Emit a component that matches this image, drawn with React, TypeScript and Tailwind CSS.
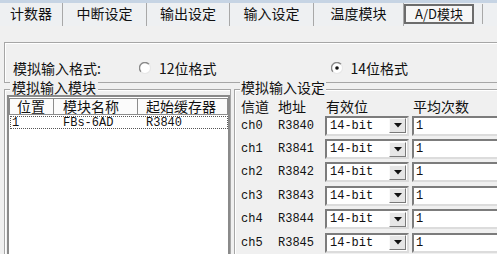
import React from "react";

const cjk = "font-['Noto_Sans_CJK_SC','Noto_Sans_CJK_JP',sans-serif]";
const mono = "font-['Liberation_Mono','Noto_Sans_CJK_SC',monospace]";

const tabs = [
  { label: "计数器", w: "w-[63px]" },
  { label: "中断设定", w: "w-[84px]" },
  { label: "输出设定", w: "w-[83px]" },
  { label: "输入设定", w: "w-[84px]" },
  { label: "温度模块", w: "w-[90px]" },
];

const channels = [
  { ch: "ch0", addr: "R3840" },
  { ch: "ch1", addr: "R3841" },
  { ch: "ch2", addr: "R3842" },
  { ch: "ch3", addr: "R3843" },
  { ch: "ch4", addr: "R3844" },
  { ch: "ch5", addr: "R3845" },
];

function Radio({ checked }: { checked?: boolean }) {
  return (
    <svg width="12" height="12" viewBox="0 0 12 12" className="shrink-0">
      <circle cx="6" cy="6" r="5.5" fill="#fff" />
      <path d="M10 2.2 A5 5 0 0 0 2 9.8" fill="none" stroke="#8a8a8a" strokeWidth="1.4" />
      <path d="M10 2.2 A5 5 0 0 1 2 9.8" fill="none" stroke="#e8e8e8" strokeWidth="1.2" />
      {checked ? <circle cx="6" cy="6" r="1.8" fill="#111" /> : null}
    </svg>
  );
}

function Combo() {
  return (
    <div className="flex h-[20px] w-[84px] items-center border-2 border-t-[#7c7c7c] border-l-[#7c7c7c] border-r-[#dcdcdc] border-b-[#dcdcdc] bg-white">
      <span className={`${mono} flex-1 pl-[3px] text-[12px] leading-none`}>14-bit</span>
      <div className="mr-[1px] flex h-[15px] w-[17px] items-center justify-center border border-t-[#fafafa] border-l-[#fafafa] border-r-[#7a7a7a] border-b-[#7a7a7a] bg-[#e6e6e6]">
        <svg width="8" height="5" viewBox="0 0 8 5">
          <path d="M0 0 H8 L4 4.5 Z" fill="#111" />
        </svg>
      </div>
    </div>
  );
}

export default function App() {
  return (
    <div className={`${cjk} h-[254px] w-[497px] overflow-hidden bg-[#f0f0f0] text-[14px] text-[#111]`}>
      {/* tab strip */}
      <div className="flex h-[26px] border-t-[3px] border-[#c6d4e4] bg-[#eef0f2]">
        {tabs.map((t) => (
          <div
            key={t.label}
            className={`${t.w} flex items-center justify-center border-r border-[#a8a8a8] pb-[4px] leading-[16px]`}
          >
            {t.label}
          </div>
        ))}
        <div className="mt-[1px] flex h-[20px] w-[70px] items-center justify-center border-2 border-[#6c6c6c] bg-[#f6f6f6] text-[13px] leading-[16px]">
          A/D模块
        </div>
        <div className="ml-[8px] mt-[1px] h-[20px] border-r border-[#a8a8a8]" />
      </div>

      {/* format group */}
      <div className="ml-[4px] mt-[16px] flex h-[41px] w-[520px] items-center border border-[#a6a6a6] pt-[10px] shadow-[inset_1px_1px_0_#fff]">
        <span className="ml-[8px] w-[126px] leading-[16px]">模拟输入格式:</span>
        <span className="flex items-center">
          <Radio />
          <span className="ml-[8px] leading-[16px]">12位格式</span>
        </span>
        <span className="ml-[114px] flex items-center">
          <Radio checked />
          <span className="ml-[8px] leading-[16px]">14位格式</span>
        </span>
      </div>

      <div className="mt-[6px] flex">
        {/* module list */}
        <div className="relative ml-[4px] h-[170px] w-[229px] border border-[#a6a6a6] pl-[2px] pt-[5px] shadow-[inset_1px_1px_0_#fff]">
          <span className="absolute -top-[10px] left-[5px] bg-[#f0f0f0] px-[2px] leading-[14px]">模拟输入模块</span>
          <div className="h-[170px] w-[223px] border-2 border-[#8a8a8a] bg-white">
            <div className="flex h-[18px] pt-[1px] leading-[15px]">
              <div className="w-[45px] border border-[#8c8c8c] bg-[#fbfbfb] pl-[7px]">位置</div>
              <div className="w-[84px] border border-l-0 border-[#8c8c8c] bg-[#fbfbfb] pl-[9px]">模块名称</div>
              <div className="w-[90px] border border-l-0 border-[#8c8c8c] bg-[#fbfbfb] pl-[8px]">起始缓存器</div>
            </div>
            <div className={`${mono} ml-[1px] mt-[1px] flex h-[13px] w-[218px] items-center border border-dotted border-[#555] text-[12px] leading-none`}>
              <span className="w-[43px] pl-[1px]">1</span>
              <span className="w-[84px] pl-[9px]">FBs-6AD</span>
              <span className="pl-[8px]">R3840</span>
            </div>
          </div>
        </div>

        {/* channel settings */}
        <div className="relative ml-[3px] h-[170px] flex-1 border-l border-t border-[#a6a6a6] pl-[6px] shadow-[inset_1px_1px_0_#fff]">
          <span className="absolute -top-[10px] left-[5px] bg-[#f0f0f0] px-[1px] leading-[14px]">模拟输入设定</span>
          <div className="mt-[9px] flex h-[15px] leading-[15px]">
            <span className="w-[37px]">信道</span>
            <span className="w-[48px]">地址</span>
            <span className="w-[87px]">有效位</span>
            <span>平均次数</span>
          </div>
          <div>
            {channels.map((c) => (
              <div key={c.ch} className="flex h-[23.4px] items-center">
                <span className={`${mono} w-[37px] text-[12px] leading-none`}>{c.ch}</span>
                <span className={`${mono} w-[47px] text-[12px] leading-none`}>{c.addr}</span>
                <Combo />
                <div className="ml-[3px] flex h-[20px] w-[90px] items-center border-2 border-t-[#7c7c7c] border-l-[#7c7c7c] border-r-[#dcdcdc] border-b-[#dcdcdc] bg-white">
                  <span className={`${mono} pl-[2px] text-[12px] leading-none`}>1</span>
                </div>
              </div>
            ))}
          </div>
        </div>
      </div>
    </div>
  );
}
